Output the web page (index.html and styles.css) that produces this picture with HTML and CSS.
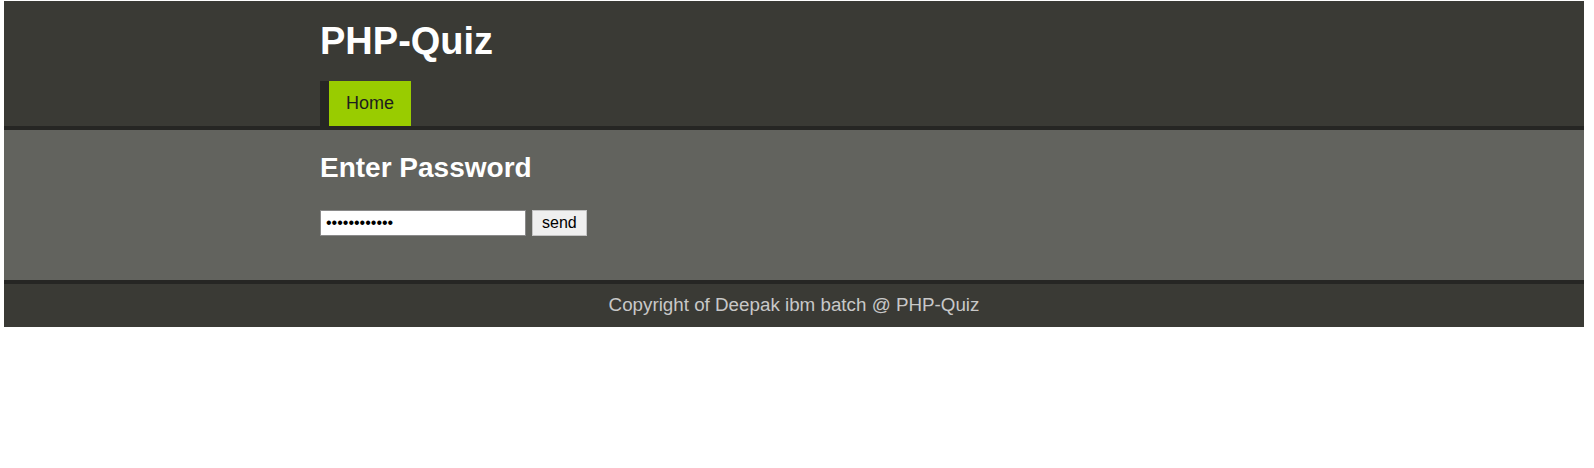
FILE: index.html
```html
<!DOCTYPE html>
<html>
<head>
<meta charset="utf-8">
<title>PHP-Quiz</title>
<link rel="stylesheet" href="styles.css">
</head>
<body>
<div class="page">
  <header class="header">
    <div class="container">
      <h1 class="logo">PHP-Quiz</h1>
      <nav class="nav">
        <a class="nav-item active" href="#">Home</a>
      </nav>
    </div>
  </header>
  <main class="main">
    <div class="container">
      <h2 class="title">Enter Password</h2>
      <form class="form">
        <input class="pass" type="password" value="123456789012"> <button class="send" type="button">send</button>
      </form>
    </div>
  </main>
  <footer class="footer">Copyright of Deepak ibm batch @ PHP-Quiz</footer>
</div>
</body>
</html>
```

FILE: styles.css
```css
html, body {
  background: #ffffff;
}
body {
  margin: 1px 10px 0 4px;
  font-family: "Liberation Sans", Arial, sans-serif;
}
.container {
  width: 948px;
  margin: 0 auto;
}
.header {
  background: #3a3a35;
  border-bottom: 4px solid #262624;
}
.logo {
  margin: 0;
  padding-top: 20px;
  height: 60px;
  line-height: 40px;
  font-size: 38px;
  font-weight: bold;
  color: #ffffff;
}
.nav {
  display: flex;
  border-left: 9px solid #262624;
  width: max-content;
}
.nav-item {
  display: block;
  height: 45px;
  line-height: 45px;
  padding: 0 17px;
  font-size: 18px;
  color: #1e1e1e;
  text-decoration: none;
}
.nav-item.active {
  background: #99cc00;
}
.main {
  background: #62635e;
  box-sizing: border-box;
  padding-top: 22px;
  border-bottom: 4px solid #262624;
  height: 154px;
}
.title {
  margin: 0;
  font-size: 28px;
  line-height: 32px;
  font-weight: bold;
  color: #ffffff;
}
.form {
  margin: 26px 0 0;
  display: flex;
  align-items: center;
  gap: 6px;
}
.pass {
  box-sizing: border-box;
  width: 206px;
  height: 26px;
  margin: 0;
  padding: 0 5px;
  border: 1px solid #8a8a8a;
  background: #ffffff;
  font-family: "Liberation Sans", Arial, sans-serif;
  font-size: 16px;
  color: #000;
  outline: none;
}
.send {
  box-sizing: border-box;
  height: 26px;
  margin: 0;
  padding: 0 9px;
  border: 1px solid #c4c4c4;
  background: #efefef;
  font-family: "Liberation Sans", Arial, sans-serif;
  font-size: 16px;
  color: #000;
}
.footer {
  background: #3a3a35;
  box-sizing: border-box;
  height: 43px;
  padding-bottom: 2px;
  line-height: 41px;
  text-align: center;
  font-size: 18.8px;
  color: #c8c8c8;
}
```
